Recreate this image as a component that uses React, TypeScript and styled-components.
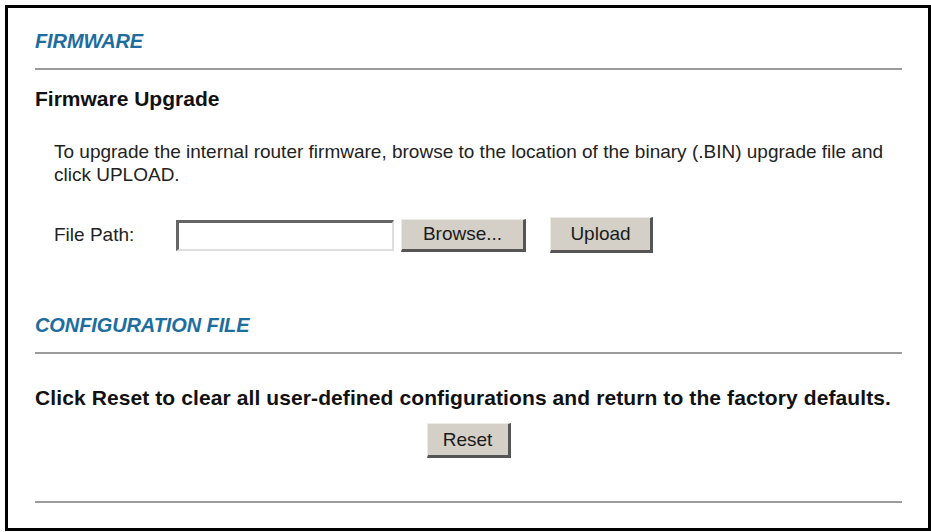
import React from 'react'
import styled, { createGlobalStyle } from 'styled-components'

const GlobalStyle = createGlobalStyle`
  html, body {
    margin: 0;
    padding: 0;
    background: #ffffff;
  }

  body {
    font-family: 'Liberation Sans', Arial, sans-serif;
    color: #1a1a1a;
  }
`

const Frame = styled.div`
  box-sizing: border-box;
  width: 926px;
  height: 526px;
  margin: 5px 0 0 5px;
  border: 3px solid #000;
  padding: 0 26px 0 27px;
  display: flex;
  flex-direction: column;
`

const SectionTitle = styled.h2<{ $top: number }>`
  margin: ${(p) => p.$top}px 0 0;
  font-size: 20px;
  line-height: 24px;
  font-weight: bold;
  font-style: italic;
  letter-spacing: -0.1px;
  color: #1d6d9f;
`

const Rule = styled.div<{ $top: number }>`
  height: 2px;
  margin-top: ${(p) => p.$top}px;
  background: #9b9b9b;
`

const SubTitle = styled.h3`
  margin: 17px 0 0;
  font-size: 21px;
  line-height: 24px;
  font-weight: bold;
  color: #111;
`

const Text = styled.p`
  margin: 29px 0 0;
  padding-left: 19px;
  font-size: 19px;
  line-height: 23px;
  color: #222;
`

const FileRow = styled.div`
  display: flex;
  align-items: center;
  height: 36px;
  margin-top: 31px;
  padding-left: 19px;
`

const Label = styled.span`
  width: 122px;
  font-size: 19px;
  color: #222;
`

const PathInput = styled.input`
  box-sizing: border-box;
  width: 218px;
  height: 31px;
  margin: 0;
  padding: 0 4px;
  border-style: solid;
  border-width: 3px 2px 2px 3px;
  border-color: #666 #dedede #dedede #666;
  background: #fff;
  outline: none;
`

const Button = styled.button<{ $w: number; $h: number; $gap?: number }>`
  box-sizing: border-box;
  width: ${(p) => p.$w}px;
  height: ${(p) => p.$h}px;
  margin: 0 0 0 ${(p) => p.$gap ?? 0}px;
  padding: 0;
  border-style: solid;
  border-width: 1px 3px 3px 1px;
  border-color: #ecebe6 #555 #555 #ecebe6;
  background: #d4d0c8;
  font-family: 'Liberation Sans', Arial, sans-serif;
  font-size: 19px;
  color: #1a1a1a;
  cursor: pointer;
`

const Notice = styled.p`
  margin: 32px 0 0;
  font-size: 21px;
  line-height: 24px;
  font-weight: bold;
  letter-spacing: 0.1px;
  color: #111;
`

const Centered = styled.div`
  display: flex;
  justify-content: center;
  margin-top: 13px;
`

export default function App() {
  return (
    <>
      <GlobalStyle />
      <Frame>
        <SectionTitle $top={21}>FIRMWARE</SectionTitle>
        <Rule $top={15} />
        <SubTitle>Firmware Upgrade</SubTitle>
        <Text>
          To upgrade the internal router firmware, browse to the location of the binary (.BIN)
          upgrade file and click UPLOAD.
        </Text>
        <FileRow>
          <Label>File Path:</Label>
          <PathInput type="text" />
          <Button $w={125} $h={33} $gap={7}>
            Browse...
          </Button>
          <Button $w={103} $h={36} $gap={24}>
            Upload
          </Button>
        </FileRow>

        <SectionTitle $top={60}>CONFIGURATION FILE</SectionTitle>
        <Rule $top={15} />
        <Notice>
          Click Reset to clear all user-defined configurations and return to the factory defaults.
        </Notice>
        <Centered>
          <Button $w={84} $h={35}>
            Reset
          </Button>
        </Centered>
        <Rule $top={43} />
      </Frame>
    </>
  )
}
